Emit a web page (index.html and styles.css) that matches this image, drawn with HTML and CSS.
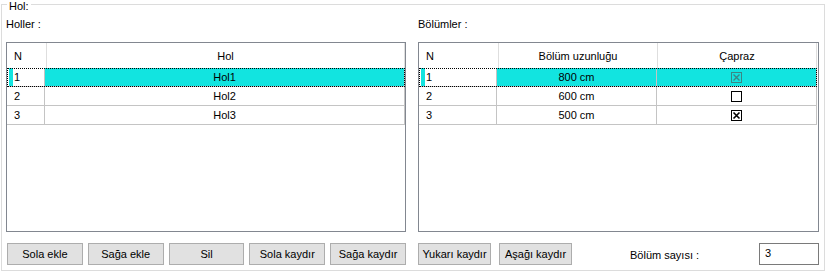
FILE: index.html
```html
<!DOCTYPE html>
<html lang="tr">
<head>
    <meta charset="UTF-8">
    <title>Hol</title>
    <link rel="stylesheet" href="styles.css">
</head>
<body>
    <div class="group">
        <span class="legend">Hol:</span>

        <div class="panes">
            <!-- left: hol list -->
            <div class="pane">
                <div class="caption">Holler :</div>
                <div class="grid">
                    <div class="grid-head hol-head">
                        <div class="hc">N</div>
                        <div class="hc center">Hol</div>
                    </div>
                    <div class="grid-row hol-row sel">
                        <div class="c edit">1</div>
                        <div class="c center">Hol1</div>
                    </div>
                    <div class="grid-row hol-row">
                        <div class="c">2</div>
                        <div class="c center">Hol2</div>
                    </div>
                    <div class="grid-row hol-row">
                        <div class="c">3</div>
                        <div class="c center">Hol3</div>
                    </div>
                </div>
                <div class="actions">
                    <button class="btn">Sola ekle</button>
                    <button class="btn">Sağa ekle</button>
                    <button class="btn">Sil</button>
                    <button class="btn">Sola kaydır</button>
                    <button class="btn">Sağa kaydır</button>
                </div>
            </div>

            <!-- right: bolum list -->
            <div class="pane">
                <div class="caption">Bölümler :</div>
                <div class="grid">
                    <div class="grid-head bolum-head">
                        <div class="hc">N</div>
                        <div class="hc center">Bölüm uzunluğu</div>
                        <div class="hc center">Çapraz</div>
                    </div>
                    <div class="grid-row bolum-row sel">
                        <div class="c edit">1</div>
                        <div class="c center">800 cm</div>
                        <div class="c check">
                            <svg width="11" height="11" viewBox="0 0 11 11"><rect x="0.5" y="0.5" width="10" height="10" fill="none" stroke="#3a8684"/><path d="M2.5 2.5 L8.5 8.5 M8.5 2.5 L2.5 8.5" stroke="#3a8684" stroke-width="1.4"/></svg>
                        </div>
                    </div>
                    <div class="grid-row bolum-row">
                        <div class="c">2</div>
                        <div class="c center">600 cm</div>
                        <div class="c check">
                            <svg width="11" height="11" viewBox="0 0 11 11"><rect x="0.5" y="0.5" width="10" height="10" fill="#fff" stroke="#000"/></svg>
                        </div>
                    </div>
                    <div class="grid-row bolum-row">
                        <div class="c">3</div>
                        <div class="c center">500 cm</div>
                        <div class="c check">
                            <svg width="11" height="11" viewBox="0 0 11 11"><rect x="0.5" y="0.5" width="10" height="10" fill="#fff" stroke="#000"/><path d="M2.5 2.5 L8.5 8.5 M8.5 2.5 L2.5 8.5" stroke="#000" stroke-width="1.6"/></svg>
                        </div>
                    </div>
                </div>
                <div class="actions actions-right">
                    <button class="btn btn-up">Yukarı kaydır</button>
                    <button class="btn btn-down">Aşağı kaydır</button>
                    <span class="count-label">Bölüm sayısı :</span>
                    <input class="count" type="text" value="3">
                </div>
            </div>
        </div>
    </div>
</body>
</html>
```

FILE: styles.css
```css
body {
    margin: 0;
    padding: 0;
    background-color: #fff;
    color: #000;
    font-family: "Liberation Sans", Arial, sans-serif;
    font-size: 11px;
}

.group {
    position: relative;
    box-sizing: border-box;
    width: 824px;
    height: 267px;
    margin: 4px 0 0 1px;
    padding: 13px 5px 0 4px;
    border: 1px solid #dcdcdc;
}

.legend {
    position: absolute;
    top: -5px;
    left: 5px;
    padding: 0 2px;
    line-height: 13px;
    background-color: #fff;
}

.panes {
    display: grid;
    grid-template-columns: 400px 401px;
    column-gap: 12px;
}

.caption {
    line-height: 13px;
    margin-bottom: 11px;
}

.grid {
    box-sizing: border-box;
    height: 190px;
    border: 1px solid #828790;
    background-color: #fff;
}

.grid-head {
    display: grid;
    height: 25px;
}

.hol-head {
    grid-template-columns: 40px 358px;
}

.bolum-head {
    grid-template-columns: 80px 159px 159px;
}

.hc {
    border-right: 1px solid #dedede;
    padding-left: 7px;
    padding-top: 1px;
    line-height: 24px;
}

.grid-row {
    display: grid;
    box-sizing: border-box;
    height: 19px;
    border-bottom: 1px solid #c4c4c4;
}

.hol-row {
    grid-template-columns: 38px 360px;
}

.bolum-row {
    width: 398px;
    grid-template-columns: 78px 160px 160px;
}

.c {
    border-right: 1px solid #c4c4c4;
    padding-left: 7px;
    padding-top: 1px;
    line-height: 17px;
    white-space: nowrap;
}

.center {
    padding-left: 0;
    text-align: center;
}

.check {
    display: flex;
    justify-content: center;
    align-items: center;
    padding: 0;
}

.sel {
    outline: 1px dotted #000;
    outline-offset: -1px;
}

.sel .c {
    background-color: #12e4e0;
}

.sel .edit {
    background: linear-gradient(to right, #fff 2px, #12e4e0 2px, #12e4e0 6px, #fff 6px);
}

.actions {
    display: flex;
    gap: 5px;
    margin-top: 11px;
    padding-left: 1px;
}

.actions-right {
    gap: 0;
    padding-left: 0;
}

.btn {
    box-sizing: border-box;
    width: 76px;
    height: 22px;
    padding: 0;
    border: 1px solid #adadad;
    background-color: #e1e1e1;
    color: #000;
    font: inherit;
    line-height: 20px;
    white-space: nowrap;
}

.btn-up {
    width: 73px;
}

.btn-down {
    width: 73px;
    margin-left: 8px;
}

.count-label {
    margin-left: 58px;
    margin-top: 6px;
    line-height: 13px;
}

.count {
    box-sizing: border-box;
    width: 60px;
    height: 22px;
    margin-left: auto;
    padding: 2px 5px 5px;
    border: 1px solid #7a7a7a;
    font: inherit;
    line-height: 13px;
    outline: none;
}
```
